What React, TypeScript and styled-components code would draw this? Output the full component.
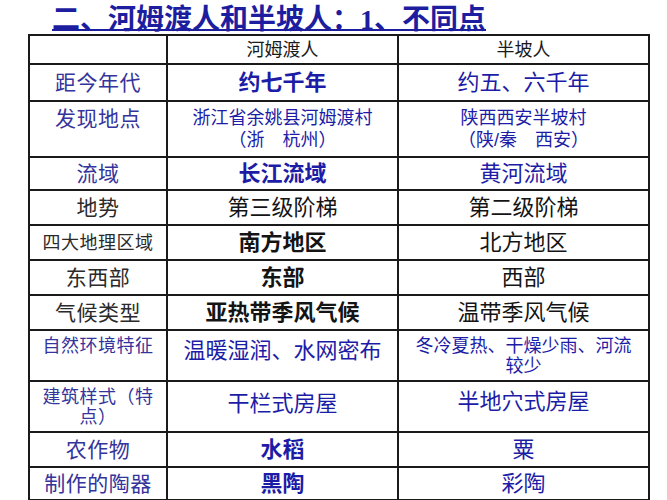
import React from "react";
import styled, { createGlobalStyle } from "styled-components";

const Global = createGlobalStyle`
  html, body { margin: 0; padding: 0; background: #ffffff; }
  body { font-family: "Noto Sans CJK SC", "Noto Sans", sans-serif; }
`;

const Page = styled.div`
  width: 667px;
  height: 500px;
  overflow: hidden;
  padding-left: 28px;
  box-sizing: border-box;
`;

const Title = styled.h1`
  margin: 0;
  height: 34px;
  padding-left: 24px;
  font-family: "Liberation Serif", "Noto Sans CJK SC", serif;
  font-size: 28px;
  font-weight: 700;
  line-height: 40px;
  color: #1d1d9f;
  text-decoration: underline;
  text-decoration-thickness: 2px;
  text-underline-offset: 0px;
  white-space: nowrap;
`;

const Table = styled.table`
  width: 620px;
  border-collapse: collapse;
  table-layout: fixed;
  border: 2px solid #1a1a1a;
  background: transparent;
`;

const Row = styled.tr<{ $h: number }>`
  height: ${(p) => p.$h}px;
`;

type Tone = "blue" | "black";

const Cell = styled.td<{ $tone?: Tone; $size?: number; $bold?: boolean; $valign?: string; $lh?: number }>`
  border: 2px solid #1a1a1a;
  padding: 0 4px;
  text-align: center;
  vertical-align: ${(p) => p.$valign || "middle"};
  font-family: "Liberation Sans", "Noto Sans CJK SC", sans-serif;
  font-size: ${(p) => p.$size || 22}px;
  font-weight: ${(p) => (p.$bold ? 700 : 400)};
  line-height: ${(p) => p.$lh || 26}px;
  color: ${(p) => (p.$tone === "black" ? "#141414" : "#1c1ca6")};
`;

const Label = styled.td<{ $tone?: Tone; $size?: number; $valign?: string; $lh?: number }>`
  border: 2px solid #1a1a1a;
  padding: 0 4px;
  text-align: center;
  vertical-align: ${(p) => p.$valign || "middle"};
  font-family: "Liberation Serif", "Noto Sans CJK SC", serif;
  font-size: ${(p) => p.$size || 21}px;
  font-weight: 400;
  line-height: ${(p) => p.$lh || 26}px;
  color: ${(p) => (p.$tone === "black" ? "#2a2a2a" : "#34349c")};
  letter-spacing: 0.5px;
`;

const Head = styled.td`
  border: 2px solid #1a1a1a;
  text-align: center;
  vertical-align: middle;
  font-family: "Liberation Sans", "Noto Sans CJK SC", sans-serif;
  font-size: 18px;
  line-height: 22px;
  color: #1a1a1a;
`;

export default function App() {
  return (
    <Page>
      <Global />
      <Title>二、河姆渡人和半坡人：1、不同点</Title>
      <Table>
        <colgroup>
          <col style={{ width: 138 }} />
          <col style={{ width: 231 }} />
          <col style={{ width: 251 }} />
        </colgroup>
        <tbody>
          <Row $h={29}>
            <Head />
            <Head>河姆渡人</Head>
            <Head>半坡人</Head>
          </Row>
          <Row $h={37}>
            <Label>距今年代</Label>
            <Cell $bold>约七千年</Cell>
            <Cell>约五、六千年</Cell>
          </Row>
          <Row $h={56}>
            <Label $valign="top" $lh={34}>发现地点</Label>
            <Cell $size={18} $lh={22}>
              浙江省余姚县河姆渡村
              <br />（浙　杭州）
            </Cell>
            <Cell $size={18} $lh={22}>
              陕西西安半坡村
              <br />（陕/秦　西安）
            </Cell>
          </Row>
          <Row $h={33}>
            <Label>流域</Label>
            <Cell $bold>长江流域</Cell>
            <Cell>黄河流域</Cell>
          </Row>
          <Row $h={35}>
            <Label $tone="black">地势</Label>
            <Cell $tone="black">第三级阶梯</Cell>
            <Cell $tone="black">第二级阶梯</Cell>
          </Row>
          <Row $h={35}>
            <Label $tone="black" $size={18}>四大地理区域</Label>
            <Cell $tone="black" $bold>南方地区</Cell>
            <Cell $tone="black">北方地区</Cell>
          </Row>
          <Row $h={35}>
            <Label $tone="black">东西部</Label>
            <Cell $tone="black" $bold>东部</Cell>
            <Cell $tone="black">西部</Cell>
          </Row>
          <Row $h={35}>
            <Label $tone="black">气候类型</Label>
            <Cell $tone="black" $bold>亚热带季风气候</Cell>
            <Cell $tone="black">温带季风气候</Cell>
          </Row>
          <Row $h={51}>
            <Label $size={18} $valign="top" $lh={30}>自然环境特征</Label>
            <Cell $valign="top" $lh={40}>温暖湿润、水网密布</Cell>
            <Cell $size={18} $lh={20}>
              冬冷夏热、干燥少雨、河流
              <br />较少
            </Cell>
          </Row>
          <Row $h={51}>
            <Label $size={18} $lh={20}>建筑样式（特<br />点）</Label>
            <Cell $valign="top" $lh={44}>干栏式房屋</Cell>
            <Cell $valign="top" $lh={40}>半地穴式房屋</Cell>
          </Row>
          <Row $h={35}>
            <Label>农作物</Label>
            <Cell $bold>水稻</Cell>
            <Cell>粟</Cell>
          </Row>
          <Row $h={33}>
            <Label>制作的陶器</Label>
            <Cell $bold>黑陶</Cell>
            <Cell>彩陶</Cell>
          </Row>
        </tbody>
      </Table>
    </Page>
  );
}
